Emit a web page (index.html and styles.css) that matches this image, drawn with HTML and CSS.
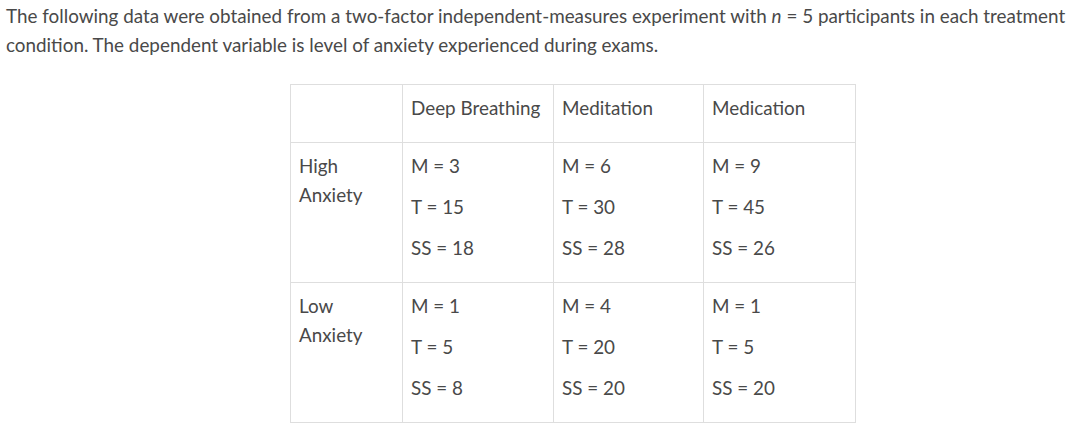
FILE: index.html
```html
<!DOCTYPE html>
<html>
<head>
<meta charset="utf-8">
<link rel="stylesheet" href="styles.css">
</head>
<body>
<p class="intro">The following data were obtained from a two-factor independent-measures experiment with <em>n</em> = 5 participants in each treatment condition. The dependent variable is level of anxiety experienced during exams.</p>
<table class="data">
  <colgroup>
    <col class="c1"><col class="c2"><col class="c3"><col class="c4">
  </colgroup>
  <tr>
    <td></td>
    <td><p>Deep Breathing</p></td>
    <td><p>Meditation</p></td>
    <td><p>Medication</p></td>
  </tr>
  <tr>
    <td><p>High Anxiety</p></td>
    <td><p>M = 3</p><p>T = 15</p><p>SS = 18</p></td>
    <td><p>M = 6</p><p>T = 30</p><p>SS = 28</p></td>
    <td><p>M = 9</p><p>T = 45</p><p>SS = 26</p></td>
  </tr>
  <tr>
    <td><p>Low Anxiety</p></td>
    <td><p>M = 1</p><p>T = 5</p><p>SS = 8</p></td>
    <td><p>M = 4</p><p>T = 20</p><p>SS = 20</p></td>
    <td><p>M = 1</p><p>T = 5</p><p>SS = 20</p></td>
  </tr>
</table>
</body>
</html>
```
FILE: styles.css
```css
html, body {
  margin: 0;
  background: #ffffff;
}
body {
  padding: 1px 6px 0 6px;
  font-family: Lato, "Open Sans", sans-serif;
  font-size: 18.85px;
  line-height: 29px;
  color: #494949;
}
.intro {
  margin: 0 0 25px 0;
}
.intro em {
  font-style: italic;
}
.data {
  border-collapse: collapse;
  table-layout: fixed;
  width: 566px;
  margin-left: 284px;
}
.data .c1 { width: 112px; }
.data .c2 { width: 151px; }
.data .c3 { width: 150px; }
.data .c4 { width: 152px; }
.data td {
  border: 1px solid #dedede;
  padding: 8px;
  vertical-align: top;
}
.data td p {
  margin: 0 0 12px 0;
}
```
